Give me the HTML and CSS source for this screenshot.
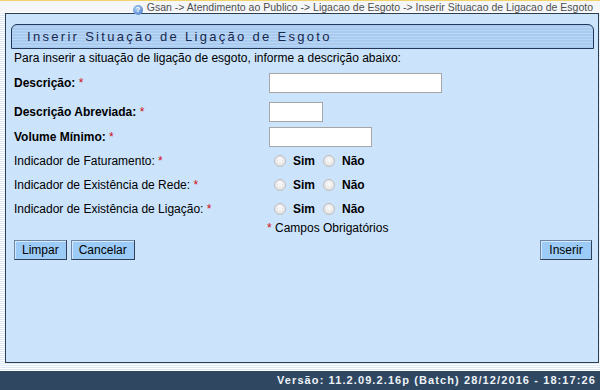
FILE: index.html
```html
<!DOCTYPE html>
<html lang="pt-BR">
<head>
    <meta charset="UTF-8">
    <title>Inserir Situação de Ligação de Esgoto</title>
    <link rel="stylesheet" href="styles.css">
</head>
<body>

    <!-- Breadcrumb -->
    <div class="topbar">
        <span class="help-icon">?</span>
        Gsan -&gt; Atendimento ao Publico -&gt; Ligacao de Esgoto -&gt; Inserir Situacao de Ligacao de Esgoto
    </div>

    <div class="panel">
        <div class="title-bar">Inserir Situação de Ligação de Esgoto</div>

        <form class="form">
            <p class="intro">Para inserir a situação de ligação de esgoto, informe a descrição abaixo:</p>

            <div class="row row-desc">
                <label class="label bold">Descrição: <span class="req">*</span></label>
                <input type="text" class="field field-long">
            </div>
            <div class="row row-abrev">
                <label class="label bold">Descrição Abreviada: <span class="req">*</span></label>
                <input type="text" class="field field-short">
            </div>
            <div class="row row-vol">
                <label class="label bold">Volume Mínimo: <span class="req">*</span></label>
                <input type="text" class="field field-mid">
            </div>

            <div class="row row-radio first">
                <label class="label">Indicador de Faturamento: <span class="req">*</span></label>
                <div class="options">
                    <input type="radio" name="faturamento"><span class="opt">Sim</span>
                    <input type="radio" name="faturamento"><span class="opt">Não</span>
                </div>
            </div>
            <div class="row row-radio">
                <label class="label">Indicador de Existência de Rede: <span class="req">*</span></label>
                <div class="options">
                    <input type="radio" name="rede"><span class="opt">Sim</span>
                    <input type="radio" name="rede"><span class="opt">Não</span>
                </div>
            </div>
            <div class="row row-radio">
                <label class="label">Indicador de Existência de Ligação: <span class="req">*</span></label>
                <div class="options">
                    <input type="radio" name="ligacao"><span class="opt">Sim</span>
                    <input type="radio" name="ligacao"><span class="opt">Não</span>
                </div>
            </div>

            <div class="row row-note">
                <span class="label"></span>
                <span class="note"><span class="req">*</span> Campos Obrigatórios</span>
            </div>

            <!-- Buttons -->
            <div class="actions">
                <div class="actions-left">
                    <button type="button" class="btn">Limpar</button>
                    <button type="button" class="btn">Cancelar</button>
                </div>
                <button type="button" class="btn">Inserir</button>
            </div>
        </form>
    </div>

    <div class="footer">Versão: 11.2.09.2.16p (Batch) 28/12/2016 - 18:17:26</div>

</body>
</html>
```

FILE: styles.css
```css
body {
    margin: 0;
    font-family: "Liberation Sans", Arial, sans-serif;
    font-size: 12px;
    color: #000;
    height: 390px;
    overflow: hidden;
    background: repeating-linear-gradient(to bottom, #ffffff 0, #ffffff 1px, #dce8f5 1px, #dce8f5 2px);
}
.topbar {
    height: 12px;
    line-height: 12px;
    font-size: 10.5px;
    color: #505050;
    text-align: right;
    padding-right: 7px;
    background-color: #f4f6f8;
    border-top: 1px solid #f1d36a;
    box-sizing: border-box;
    white-space: nowrap;
}
.help-icon {
    display: inline-block;
    width: 10px;
    height: 10px;
    line-height: 10px;
    border-radius: 50%;
    background: radial-gradient(circle at 35% 35%, #a9ccf4, #3e74c4);
    color: #fff;
    font-size: 8px;
    font-weight: bold;
    text-align: center;
    vertical-align: -1px;
    margin-right: 1px;
}

/* Main panel */
.panel {
    margin: 1px 1px 0 5px;
    height: 350px;
    box-sizing: border-box;
    background-color: #cbe3fb;
    border: 1px solid #2b3d52;
    padding: 10px 4px 0 5px;
}
.title-bar {
    height: 25px;
    box-sizing: border-box;
    border: 1px solid #22385a;
    border-radius: 6px 6px 0 0;
    background: repeating-linear-gradient(to bottom, #a9cbf0 0, #a9cbf0 2px, #bcd7f5 2px, #bcd7f5 3px);
    color: #17294f;
    font-size: 13px;
    letter-spacing: 2.3px;
    line-height: 23px;
    padding-left: 15px;
}
.form {
    padding: 0 2px 0 3px;
    margin: 0;
}
.intro {
    margin: 0;
    height: 17px;
    line-height: 17px;
    padding-top: 1px;
}
.row {
    display: flex;
    align-items: center;
}
.row-desc {
    height: 20px;
    margin-top: 6px;
}
.row-abrev {
    height: 20px;
    margin-top: 9px;
}
.row-vol {
    height: 20px;
    margin-top: 5px;
}
.row-radio {
    height: 24px;
}
.row-radio.first {
    margin-top: 2px;
}
.row-note {
    height: 14px;
    margin-top: 0;
}
.label {
    width: 255px;
    flex-shrink: 0;
}
.bold {
    font-weight: bold;
}
.req {
    color: #d01010;
    font-weight: normal;
}
.field {
    height: 20px;
    box-sizing: border-box;
    border: 1px solid #a6a6a6;
    background-color: #fff;
    margin: 0;
    padding: 1px 2px;
}
.field-long {
    width: 173px;
}
.field-short {
    width: 54px;
}
.field-mid {
    width: 103px;
}
.options {
    display: flex;
    align-items: center;
    padding-left: 5px;
}
.options input[type="radio"] {
    appearance: none;
    -webkit-appearance: none;
    width: 12px;
    height: 12px;
    margin: 0 7px 0 0;
    border: 1px solid #bdbdbd;
    border-radius: 50%;
    background: radial-gradient(circle at 50% 40%, #fbfbfb, #d9d9d9);
}
.opt {
    font-weight: bold;
    margin-right: 8px;
}
.note {
    margin-left: -2px;
}
.actions {
    display: flex;
    justify-content: space-between;
    margin-top: 5px;
}
.actions-left {
    display: flex;
    gap: 4px;
}
.btn {
    height: 20px;
    min-width: 52px;
    padding: 0 7px;
    font-family: "Liberation Sans", Arial, sans-serif;
    font-size: 12px;
    color: #000;
    background-color: #9dcbf7;
    border: 1px solid #2f4058;
    border-top-color: #6d86a3;
    border-left-color: #6d86a3;
    box-shadow: inset 1px 1px 0 #d4e9fd;
    cursor: pointer;
}

.footer {
    margin-top: 8px;
    height: 19px;
    line-height: 19px;
    background-color: #2f4761;
    color: #eef3f8;
    font-size: 11px;
    font-weight: bold;
    letter-spacing: 1.1px;
    text-align: right;
    padding-right: 4px;
    white-space: nowrap;
}
```
